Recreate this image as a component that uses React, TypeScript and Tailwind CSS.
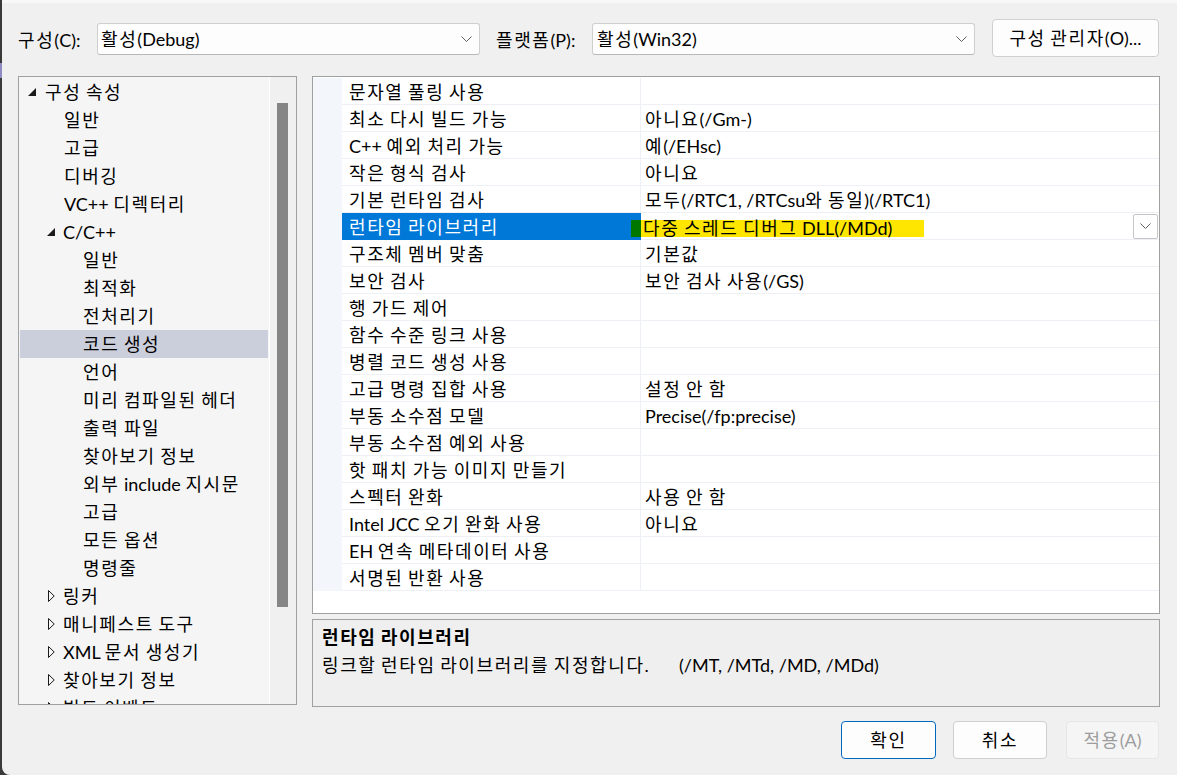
import React from "react";

const FONT = "[font-family:Lato,'Noto_Sans_CJK_KR',sans-serif]";

function K({ s }: { s: string }) {
  const parts = s.split(/([\uac00-\ud7a3]+)/);
  return (
    <span>
      {parts.map((p, i) =>
        /[\uac00-\ud7a3]/.test(p) ? (
          <span key={i} className="tracking-[1.6px]">
            {p}
          </span>
        ) : (
          <React.Fragment key={i}>{p}</React.Fragment>
        )
      )}
    </span>
  );
}

function Chevron() {
  return (
    <svg width="11" height="7" viewBox="0 0 11 7" className="shrink-0">
      <path d="M0.5 0.5 L5.5 5.5 L10.5 0.5" stroke="#5f5f5f" strokeWidth="1" fill="none" />
    </svg>
  );
}

function OpenTri() {
  return (
    <svg width="8" height="8" viewBox="0 0 8 8" className="shrink-0">
      <polygon points="0,8 8,8 8,0" fill="#1a1a1a" />
    </svg>
  );
}

function ClosedTri() {
  return (
    <svg width="7" height="12" viewBox="0 0 7 12" className="shrink-0">
      <polygon points="0.5,0.5 6.2,6 0.5,11.5" fill="none" stroke="#1a1a1a" strokeWidth="1" />
    </svg>
  );
}

type Kind = "open0" | "l1" | "open1" | "l2" | "closed";

const tree: { t: string; k: Kind; sel?: boolean }[] = [
  { t: "구성 속성", k: "open0" },
  { t: "일반", k: "l1" },
  { t: "고급", k: "l1" },
  { t: "디버깅", k: "l1" },
  { t: "VC++ 디렉터리", k: "l1" },
  { t: "C/C++", k: "open1" },
  { t: "일반", k: "l2" },
  { t: "최적화", k: "l2" },
  { t: "전처리기", k: "l2" },
  { t: "코드 생성", k: "l2", sel: true },
  { t: "언어", k: "l2" },
  { t: "미리 컴파일된 헤더", k: "l2" },
  { t: "출력 파일", k: "l2" },
  { t: "찾아보기 정보", k: "l2" },
  { t: "외부 include 지시문", k: "l2" },
  { t: "고급", k: "l2" },
  { t: "모든 옵션", k: "l2" },
  { t: "명령줄", k: "l2" },
  { t: "링커", k: "closed" },
  { t: "매니페스트 도구", k: "closed" },
  { t: "XML 문서 생성기", k: "closed" },
  { t: "찾아보기 정보", k: "closed" },
  { t: "빌드 이벤트", k: "closed" },
];

const props: [string, string][] = [
  ["문자열 풀링 사용", ""],
  ["최소 다시 빌드 가능", "아니요(/Gm-)"],
  ["C++ 예외 처리 가능", "예(/EHsc)"],
  ["작은 형식 검사", "아니요"],
  ["기본 런타임 검사", "모두(/RTC1, /RTCsu와 동일)(/RTC1)"],
  ["런타임 라이브러리", "다중 스레드 디버그 DLL(/MDd)"],
  ["구조체 멤버 맞춤", "기본값"],
  ["보안 검사", "보안 검사 사용(/GS)"],
  ["행 가드 제어", ""],
  ["함수 수준 링크 사용", ""],
  ["병렬 코드 생성 사용", ""],
  ["고급 명령 집합 사용", "설정 안 함"],
  ["부동 소수점 모델", "Precise(/fp:precise)"],
  ["부동 소수점 예외 사용", ""],
  ["핫 패치 가능 이미지 만들기", ""],
  ["스펙터 완화", "사용 안 함"],
  ["Intel JCC 오기 완화 사용", "아니요"],
  ["EH 연속 메타데이터 사용", ""],
  ["서명된 반환 사용", ""],
];

function TreeRow({ t, k, sel }: { t: string; k: Kind; sel?: boolean }) {
  const bg = sel ? "bg-[#cbcedb]" : "";
  if (k === "open0")
    return (
      <div className={`flex items-center h-[28px] pl-[8px] ${bg}`}>
        <OpenTri />
        <span className="ml-[9px] whitespace-nowrap"><K s={t} /></span>
      </div>
    );
  if (k === "open1")
    return (
      <div className={`flex items-center h-[28px] pl-[27px] ${bg}`}>
        <OpenTri />
        <span className="ml-[8px] whitespace-nowrap"><K s={t} /></span>
      </div>
    );
  if (k === "closed")
    return (
      <div className={`flex items-center h-[28px] pl-[28px] ${bg}`}>
        <ClosedTri />
        <span className="ml-[8px] whitespace-nowrap"><K s={t} /></span>
      </div>
    );
  if (k === "l1")
    return (
      <div className={`flex items-center h-[28px] pl-[44px] ${bg}`}>
        <span className="whitespace-nowrap"><K s={t} /></span>
      </div>
    );
  return (
    <div className={`flex items-center h-[28px] pl-[63px] ${bg}`}>
      <span className="whitespace-nowrap"><K s={t} /></span>
    </div>
  );
}

function PropRow({ name, value, sel }: { name: string; value: string; sel: boolean }) {
  return (
    <div className="flex h-[27px]">
      <div className="w-[29px] bg-[#f3f6fb]" />
      {sel ? (
        <div className="w-[299px] flex bg-[#0078d7] text-white">
          <div className="flex-1 pl-[7px] pt-[2px] leading-[25px] whitespace-nowrap"><K s={name} /></div>
          <div className="w-[10px] h-[17px] mt-[7px] bg-[#007800]" />
        </div>
      ) : (
        <div className="w-[299px] pl-[7px] pt-[2px] leading-[24px] border-b border-r border-[#edf0f5] whitespace-nowrap">
          <K s={name} />
        </div>
      )}
      {sel ? (
        <div className="flex-1 flex border-b border-[#edf0f5]">
          <div className="w-[283px] h-[17px] mt-[7px] bg-[#ffe600] pl-[2px] leading-[17px] whitespace-nowrap">
            <K s={value} />
          </div>
          <div className="flex-1" />
          <div className="w-[25px] h-[25px] mt-[1px] mr-[1px] bg-white border border-[#c6c6c6] rounded-[2px] flex items-center justify-center">
            <Chevron />
          </div>
        </div>
      ) : (
        <div className="flex-1 pl-[4px] pt-[2px] leading-[24px] border-b border-[#edf0f5] whitespace-nowrap">
          <K s={value} />
        </div>
      )}
    </div>
  );
}

export default function App() {
  return (
    <div className={`w-[1177px] h-[775px] flex bg-[#3a3a3a] overflow-hidden text-[18px] text-black ${FONT}`}>
      <div className="w-[2px] flex flex-col">
        <div className="h-[63px]" />
        <div className="h-[15px] bg-[#8f8bc2]" />
      </div>
      <div className="w-[1175px] h-[775px] bg-[#f0f0f0] rounded-bl-[8px] flex flex-col">
        <div className="h-[3px] bg-[#f8f8f8]" />
        {/* top row */}
        <div className="mt-[16px] flex items-start pl-[16px] h-[38px]">
          <div className="w-[79px] h-[32px] mt-[5px] flex items-center whitespace-nowrap"><K s="구성(C):" /></div>
          <div className="w-[383px] h-[32px] mt-[4px] bg-[#fdfdfd] border border-[#cfcfcf] border-b-[#b8b8b8] rounded-[3px] flex items-center justify-between pl-[3px] pr-[7px]">
            <span className="whitespace-nowrap pt-[1px]"><K s="활성(Debug)" /></span>
            <Chevron />
          </div>
          <div className="w-[96px] h-[32px] mt-[5px] ml-[16px] flex items-center whitespace-nowrap"><K s="플랫폼(P):" /></div>
          <div className="w-[383px] h-[32px] mt-[4px] bg-[#fdfdfd] border border-[#cfcfcf] border-b-[#b8b8b8] rounded-[3px] flex items-center justify-between pl-[4px] pr-[7px]">
            <span className="whitespace-nowrap pt-[1px]"><K s="활성(Win32)" /></span>
            <Chevron />
          </div>
          <div className="w-[167px] h-[38px] ml-[17px] bg-[#fdfdfd] border border-[#d0d0d0] rounded-[4px] flex items-center justify-center whitespace-nowrap">
            <K s="구성 관리자(O)..." />
          </div>
        </div>

        {/* main */}
        <div className="mt-[19px] flex pl-[16px] gap-[15px]">
          {/* tree */}
          <div className="w-[279px] h-[629px] border border-[#a0a0a0] flex overflow-hidden">
            <div className="flex-1 bg-[#f5f5f5] pt-[1px] px-[1px] overflow-hidden">
              {tree.map((r, i) => (
                <TreeRow key={i} t={r.t} k={r.k} sel={r.sel} />
              ))}
            </div>
            <div className="w-[1px] bg-white" />
            <div className="w-[26px] bg-[#f0f0f0] pt-[26px] pl-[7px]">
              <div className="w-[11px] h-[504px] bg-[#858585]" />
            </div>
          </div>

          {/* right column */}
          <div className="w-[848px] flex flex-col">
            <div className="h-[538px] border border-[#a0a0a0] bg-white pt-[1px] overflow-hidden">
              {props.map(([n, v], i) => (
                <PropRow key={i} name={n} value={v} sel={i === 5} />
              ))}
            </div>
            <div className="mt-[5px] h-[88px] border border-[#a0a0a0] bg-[#efefef] pl-[9px] pt-[4px]">
              <div className="font-bold leading-[26px] whitespace-nowrap"><K s="런타임 라이브러리" /></div>
              <div className="mt-[2px] leading-[26px] whitespace-nowrap flex">
                <span className="w-[357px]"><K s="링크할 런타임 라이브러리를 지정합니다." /></span>
                <span>(/MT, /MTd, /MD, /MDd)</span>
              </div>
            </div>
          </div>
        </div>

        {/* buttons */}
        <div className="mt-[14px] flex justify-end pr-[18px]">
          <div className="w-[95px] h-[38px] bg-[#fdfdfd] border border-[#0067c0] rounded-[4px] flex items-center justify-center">
            <K s="확인" />
          </div>
          <div className="w-[94px] h-[38px] ml-[17px] bg-[#fdfdfd] border border-[#d0d0d0] rounded-[4px] flex items-center justify-center">
            <K s="취소" />
          </div>
          <div className="w-[93px] h-[38px] ml-[19px] bg-[#f5f5f5] border border-[#e6e6e6] rounded-[4px] flex items-center justify-center text-[#9d9d9d]">
            <K s="적용(A)" />
          </div>
        </div>
      </div>
    </div>
  );
}
